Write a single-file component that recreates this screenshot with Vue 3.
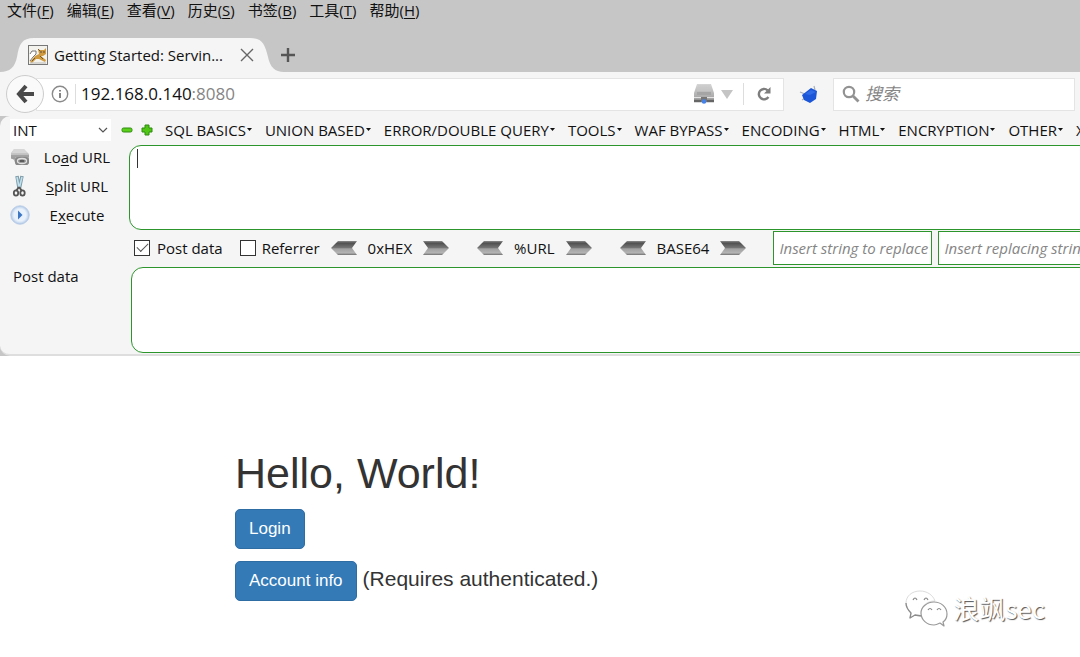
<script setup>
import { ref } from 'vue'

const menus = [
  ['文件', 'F'], ['编辑', 'E'], ['查看', 'V'], ['历史', 'S'],
  ['书签', 'B'], ['工具', 'T'], ['帮助', 'H'],
]
const hackMenus = [
  'SQL BASICS', 'UNION BASED', 'ERROR/DOUBLE QUERY', 'TOOLS', 'WAF BYPASS',
  'ENCODING', 'HTML', 'ENCRYPTION', 'OTHER', 'XSS',
]
const codecs = ['0xHEX', '%URL', 'BASE64']
const mode = ref('INT')
const postOn = ref(true)
const refOn = ref(false)
const url = ref('')
const body = ref('')
</script>

<template>
  <div class="browser">
    <svg class="defs" width="0" height="0" aria-hidden="true">
      <defs>
        <linearGradient id="steel" x1="0" y1="0" x2="0" y2="1">
          <stop offset="0" stop-color="#8c8c8c" />
          <stop offset="0.15" stop-color="#505050" />
          <stop offset="0.5" stop-color="#777" />
          <stop offset="0.55" stop-color="#a0a0a0" />
          <stop offset="0.85" stop-color="#b4b4b4" />
          <stop offset="1" stop-color="#707070" />
        </linearGradient>
        <linearGradient id="metal" x1="0" y1="0" x2="0" y2="1">
          <stop offset="0" stop-color="#d6d6d6" />
          <stop offset="1" stop-color="#9a9a9a" />
        </linearGradient>
        <radialGradient id="play">
          <stop offset="0.45" stop-color="#ffffff" />
          <stop offset="0.75" stop-color="#dbe7f6" />
          <stop offset="1" stop-color="#a9c2e4" />
        </radialGradient>
      </defs>
    </svg>

    <header class="chrome">
      <nav class="menubar">
        <button v-for="m in menus" :key="m[1]" type="button">{{ m[0] }}(<u>{{ m[1] }}</u>)</button>
      </nav>
      <div class="tabs">
        <div class="tab">
          <svg class="tab-shape" viewBox="0 0 284 34" preserveAspectRatio="none" aria-hidden="true">
            <path d="M0 34C10 34 15 29 17 19C19 6 22 0 34 0H250C262 0 265 6 268 19C270 29 275 34 284 34Z" fill="#f5f5f5" />
          </svg>
          <svg class="favicon" width="20" height="20" viewBox="0 0 20 20" aria-hidden="true">
            <rect x="0.5" y="0.5" width="19" height="19" fill="#f4f2ec" stroke="#777" />
            <path d="M2 9L4 6L8 6L8 9L5 12L2 16" fill="#fff" stroke="#666" stroke-width="0.9" />
            <path d="M10 4L12 5L16 5L18 3L18 9L15 11L13 11L18 15L17 17L11 14L8 14L4 18L2 17L7 11L11 9Z" fill="#d09a40" />
            <path d="M10 4L12 6M12 11L15 14M7 13L4 16" stroke="#6d5325" stroke-width="0.9" />
            <circle cx="13" cy="7" r="0.7" fill="#333" /><circle cx="16" cy="7" r="0.7" fill="#333" />
            <path d="M2 18H18" stroke="#b9b9b9" />
          </svg>
          <span class="tab-title">Getting Started: Servin...</span>
          <button type="button" class="tab-close" aria-label="Close tab">
            <svg width="14" height="14" viewBox="0 0 14 14"><path d="M1 1L13 13M13 1L1 13" stroke="#666" stroke-width="1.400" /></svg>
          </button>
        </div>
        <button type="button" class="new-tab" aria-label="New tab">
          <svg width="16" height="16" viewBox="0 0 16 16"><path d="M8 1V15M1 8H15" stroke="#555" stroke-width="2.400" /></svg>
        </button>
      </div>
    </header>

    <div class="navbar">
      <button type="button" class="back" aria-label="Back">
        <svg width="20" height="20" viewBox="0 0 20 20"><path d="M11 2L4 10L11 18M4.500 10H19" fill="none" stroke="#4a4a4a" stroke-width="4" /></svg>
      </button>
      <div class="address">
        <svg class="info" width="18" height="18" viewBox="0 0 18 18" aria-hidden="true">
          <circle cx="9" cy="9" r="7.700" fill="none" stroke="#8a8a8a" stroke-width="1.400" />
          <path d="M9 8V13M9 5V6.600" stroke="#777" stroke-width="1.800" />
        </svg>
        <a class="location" href="#">192.168.0.140<span>:8080</span></a>
        <svg class="server" width="20" height="20" viewBox="0 0 20 20" aria-hidden="true">
          <path d="M3 0H17L20 9V18H0V9Z" fill="url(#metal)" />
          <path d="M4 2H16M3.500 4H16.500M3 6H17" stroke="#c9c9c9" />
          <rect x="3" y="8" width="14" height="3" fill="#a5a5a5" />
          <path d="M0 13.500H20" stroke="#e4e4e4" />
          <path d="M0 17H20" stroke="#666" stroke-width="2.500" />
          <rect x="7" y="13" width="6" height="5" fill="#777" />
          <circle cx="10" cy="17.500" r="2.300" fill="#4682e8" />
        </svg>
        <svg class="drop" width="12" height="9" viewBox="0 0 12 9" aria-hidden="true"><path d="M0 0H12L6 9Z" fill="#c4c4c4" /></svg>
        <button type="button" class="reload" aria-label="Reload">
          <svg width="16" height="16" viewBox="0 0 16 16">
            <path d="M11.600 4.300A5.200 5.200 0 1 0 12.400 11" fill="none" stroke="#7d7d7d" stroke-width="2.400" />
            <path d="M14.500 1V7.500H8Z" fill="#7d7d7d" />
          </svg>
        </button>
      </div>
      <button type="button" class="addon" aria-label="Hackbar">
        <svg width="20" height="18" viewBox="0 0 20 18">
          <path d="M1 7L6 9M16 5L15 1M3 15L6 13" stroke="#a8b0ba" stroke-width="1.200" />
          <path d="M3 10L12 3L18 6L17 14L11 18L5 15Z" fill="#1c56d8" />
          <path d="M6 9L12 5L17 7L11 10Z" fill="#2f6be6" />
        </svg>
      </button>
      <label class="search">
        <svg width="18" height="18" viewBox="0 0 18 18" aria-hidden="true">
          <circle cx="7" cy="7" r="5.200" fill="none" stroke="#929292" stroke-width="2.200" />
          <path d="M11 11L16.500 16.500" stroke="#929292" stroke-width="2.800" />
        </svg>
        <input type="search" placeholder="搜索" aria-label="搜索" />
      </label>
    </div>

    <section class="hackbar">
      <div class="side">
        <div class="select-box">
          <select v-model="mode" aria-label="Type"><option>INT</option></select>
          <svg width="10" height="6" viewBox="0 0 10 6" aria-hidden="true"><path d="M1 1L5 5L9 1" fill="none" stroke="#555" stroke-width="1.200" /></svg>
        </div>
        <button type="button" class="action">
          <svg width="20" height="20" viewBox="0 0 20 20" aria-hidden="true">
            <path d="M4 2H14L19 7V16L17 18H6L4 13L1 11V6Z" fill="url(#metal)" />
            <path d="M4 2H14L17 6H2Z" fill="#d7d7d7" />
            <path d="M1 9H19M1 11H5" stroke="#888" />
            <rect x="5" y="10" width="14" height="8" rx="3" fill="#888" />
            <ellipse cx="12" cy="14" rx="4.500" ry="2.500" fill="none" stroke="#e1e1e1" stroke-width="1.300" />
            <path d="M10 14H14" stroke="#444" stroke-width="1.300" />
          </svg>
          <span>Lo<u>a</u>d URL</span>
        </button>
        <button type="button" class="action">
          <svg width="20" height="22" viewBox="0 0 20 22" aria-hidden="true">
            <path d="M7 1L9 13M12 1L9.500 13" stroke="#7f9ba8" stroke-width="3.500" />
            <path d="M7 2L9 12M12 2L9.500 12" stroke="#bfe0ee" stroke-width="1.600" />
            <path d="M9 12L6 16M9 12L12 16" stroke="#555" stroke-width="2" />
            <ellipse cx="6" cy="18" rx="2.200" ry="2.600" fill="none" stroke="#555" stroke-width="1.800" />
            <ellipse cx="12.500" cy="18" rx="2.200" ry="2.600" fill="none" stroke="#555" stroke-width="1.800" />
          </svg>
          <span><u>S</u>plit URL</span>
        </button>
        <button type="button" class="action">
          <svg width="20" height="20" viewBox="0 0 20 20" aria-hidden="true">
            <circle cx="10" cy="10" r="9.300" fill="url(#play)" stroke="#b9cbe6" stroke-width="0.800" />
            <circle cx="10" cy="10" r="6" fill="#e9f2fc" />
            <path d="M8 5.500L12.500 10L8 14.500Z" fill="#3e78c4" />
          </svg>
          <span>E<u>x</u>ecute</span>
        </button>
        <label class="post-label" for="post-body">Post data</label>
      </div>

      <div class="main">
        <div class="hack-menu">
          <button type="button" class="sign" aria-label="Remove">
            <svg width="12" height="12" viewBox="0 0 12 12"><rect x="1" y="4" width="10" height="4" rx="1.500" fill="#5bd01a" stroke="#2f8a10" /></svg>
          </button>
          <button type="button" class="sign" aria-label="Add">
            <svg width="12" height="12" viewBox="0 0 12 12"><path d="M4 1H8V4H11V8H8V11H4V8H1V4H4Z" fill="#4fc514" stroke="#2f8a10" stroke-linejoin="round" /></svg>
          </button>
          <div class="hack-items">
            <button v-for="h in hackMenus" :key="h" type="button">
              {{ h }}<svg width="5" height="3" viewBox="0 0 5 3" aria-hidden="true"><path d="M0 0H5L2.500 3Z" fill="#111" /></svg>
            </button>
          </div>
        </div>
        <div class="url-wrap">
          <textarea v-model="url" class="area" aria-label="URL"></textarea>
          <i class="caret"></i>
        </div>
        <div class="tools">
          <label class="check">
            <input v-model="postOn" type="checkbox" />Post data
          </label>
          <label class="check">
            <input v-model="refOn" type="checkbox" />Referrer
          </label>
          <div v-for="c in codecs" :key="c" class="codec">
            <button type="button" :aria-label="'Decode ' + c">
              <svg width="28" height="16" viewBox="0 0 28 16"><path d="M1 8L8 1H27L22 8L27 15H8Z" fill="url(#steel)" /></svg>
            </button>
            <span>{{ c }}</span>
            <button type="button" :aria-label="'Encode ' + c">
              <svg width="28" height="16" viewBox="0 0 28 16"><path d="M27 8L20 1H1L6 8L1 15H20Z" fill="url(#steel)" /></svg>
            </button>
          </div>
          <div class="replace">
            <input type="text" placeholder="Insert string to replace" aria-label="Insert string to replace" />
            <input type="text" placeholder="Insert replacing string" aria-label="Insert replacing string" />
          </div>
        </div>
        <textarea id="post-body" v-model="body" class="area post"></textarea>
      </div>
    </section>

    <main class="page">
      <h1>Hello, World!</h1>
      <p><a class="btn" href="#">Login</a></p>
      <p><a class="btn" href="#">Account info</a><span>(Requires authenticated.)</span></p>
    </main>

    <div class="watermark">
      <svg width="44" height="38" viewBox="0 0 44 38" aria-hidden="true">
        <g fill="#fff" stroke-linejoin="round">
          <path d="M15 2C7 2 1 7 1 14C1 18 3 21 6 24L5 29L10 26C12 27 14 27 17 27C15 18 21 12 30 12C28 6 22 2 15 2Z" stroke="#dcdcdc" />
          <path d="M1 14C1 18 3 21 6 24L5 29L10 26L17 27" fill="none" stroke="#8c8c8c" stroke-width="1.300" />
          <path d="M29 13C22 13 16 18 16 24C16 31 22 36 29 36C31 36 33 35 35 34L39 37L38 33C41 31 42 28 42 25C42 18 36 13 29 13Z" stroke="#999" stroke-width="1.200" />
          <path d="M8 11Q10 7 12 11M19 11Q21 7 23 11M23 21Q25 18 27 21M32 21Q34 18 36 21" fill="none" stroke="#888" stroke-width="1.200" />
        </g>
      </svg>
      <span>浪飒sec</span>
    </div>
  </div>
</template>

<style>
body {
  margin: 0;
  background: #fff;
  overflow: hidden;
}
</style>

<style scoped>
.browser {
  position: relative;
  min-height: 100vh;
  overflow: hidden;
  font: 15px/20px "Open Sans", "Noto Sans CJK SC", sans-serif;
  color: #111;
}
.browser *, .browser *::before { box-sizing: border-box; }
.defs { position: absolute; }
svg { display: block; flex: none; }
button {
  padding: 0;
  border: 0;
  background: none;
  font: inherit;
  color: inherit;
  white-space: nowrap;
}
input, textarea, select { font: inherit; color: inherit; outline: 0; }
u { text-underline-offset: 2px; }

.chrome { background: #c6c6c6; }
.menubar {
  display: flex;
  gap: 13px;
  height: 38px;
  padding: 0 7px;
  align-items: flex-start;
}
.tabs { display: flex; height: 34px; align-items: stretch; }
.tab {
  position: relative;
  display: flex;
  align-items: center;
  width: 284px;
  padding: 0 30px 0 28px;
}
.tab-shape { position: absolute; inset: 0; width: 100%; height: 100%; }
.favicon, .tab-title, .tab-close { position: relative; }
.tab-title { flex: 1; margin-left: 6px; white-space: nowrap; }
.new-tab { margin-left: -4px; }

.navbar {
  display: flex;
  align-items: center;
  height: 44px;
  padding: 0 5px 0 6px;
  background: #f5f5f5;
}
.back {
  position: relative;
  z-index: 1;
  display: grid;
  place-items: center;
  width: 38px;
  height: 38px;
  border: 1px solid #ccc;
  border-radius: 50%;
  background: #fafafa;
}
.address {
  flex: 1;
  display: flex;
  align-items: center;
  height: 33px;
  margin-left: -8px;
  padding-left: 14px;
  border: 1px solid #e4e4e4;
  background: #fff;
}
.location {
  flex: 1;
  margin-left: 6px;
  padding-left: 5px;
  border-left: 1px solid #ddd;
  color: #111;
  font-size: 17px;
  text-decoration: none;
}
.location span { color: #858585; }
.drop { margin: 0 10px 0 7px; }
.reload {
  display: grid;
  place-items: center;
  width: 40px;
  height: 22px;
  border-left: 1px solid #ddd;
}
.addon { margin: 0 14px 0 15px; }
.search {
  display: flex;
  align-items: center;
  gap: 5px;
  width: 242px;
  height: 33px;
  padding: 0 8px;
  border: 1px solid #e4e4e4;
  background: #fff;
}
.search input { flex: 1; min-width: 0; padding: 0; border: 0; background: none; font-size: 17px; }
::placeholder { color: #858585; font-style: italic; opacity: 1; }

.hackbar {
  display: flex;
  height: 240px;
  background: #f5f5f5;
  border-bottom: 2px solid #dedede;
  border-radius: 10px 0 0 10px;
  box-shadow: 0 0 0 10px #c6c6c6;
  clip-path: inset(0);
}
.side { flex: none; width: 121px; padding: 3px 0 0 10px; }
.select-box { position: relative; width: 101px; height: 22px; margin-bottom: 6px; }
.select-box select {
  appearance: none;
  width: 100%;
  height: 22px;
  padding: 0 3px;
  border: 0;
  border-radius: 0;
  background: #fff;
}
.select-box svg { position: absolute; right: 3px; top: 8px; }
.action { display: flex; align-items: center; width: 102px; height: 20px; margin-bottom: 9px; }
.action span { flex: 1; text-align: center; margin-left: 12px; }
.post-label { display: block; margin: 41px 0 0 3px; }

.main { flex: 1; min-width: 0; padding-left: 8px; overflow: hidden; }
.hack-menu { display: flex; align-items: center; height: 29px; margin-left: -8px; padding-bottom: 2px; }
.sign { margin-right: 8px; }
.hack-items { display: flex; gap: 13px; margin-left: 4px; }
.hack-items button { display: flex; align-items: center; gap: 1px; }
.url-wrap { position: relative; height: 85px; margin-right: -20px; }
.area {
  display: block;
  width: 100%;
  height: 85px;
  margin: 0;
  padding: 5px 8px;
  border: 1px solid #2c962c;
  border-radius: 12px;
  background: #fff;
  resize: none;
}
.caret { position: absolute; left: 8px; top: 4px; width: 1px; height: 19px; background: #333; }
.tools { display: flex; align-items: center; height: 37px; padding: 0 0 1px 5px; white-space: nowrap; }
.check { display: flex; align-items: center; gap: 7px; margin-right: 10px; }
.check + .check { gap: 6px; margin-left: 7px; }
.check input {
  appearance: none;
  width: 16px;
  height: 16px;
  margin: 0;
  border: 1px solid #333;
  background: #fff;
}
.check input:checked::before {
  content: "";
  display: block;
  width: 11px;
  height: 6px;
  margin: 2px 0 0 2px;
  border: solid #555;
  border-width: 0 0 1px 1px;
  transform: rotate(-45deg);
}
.codec { display: flex; align-items: center; gap: 10px; margin-right: 26px; }
.replace { display: flex; flex: none; gap: 6px; }
.replace input {
  width: 159px;
  height: 34px;
  padding: 0 1px 0 5px;
  border: 1px solid #2c962c;
  background: #fff;
}
.area.post { width: calc(100% + 18px); height: 86px; margin-left: 2px; }

.page {
  padding: 93px 235px 0;
  font-family: "Liberation Sans", Arial, sans-serif;
  color: #333;
}
h1 { margin: 0; font-size: 43px; line-height: 48px; font-weight: 400; }
.page p { display: flex; align-items: flex-start; gap: 6px; margin: 12px 0 0; font-size: 21px; line-height: 36px; white-space: nowrap; }
.btn {
  padding: 0 13px;
  border: 1px solid #2e6da4;
  border-radius: 5px;
  background: #337ab7;
  color: #fff;
  font-size: 17px;
  line-height: 38px;
  text-decoration: none;
}
.watermark {
  position: absolute;
  right: 35px;
  bottom: 30px;
  display: flex;
  align-items: center;
  gap: 4px;
  color: #fff;
  font: 26px/38px "Noto Sans CJK SC", sans-serif;
  text-shadow: 1px 1px 1px #555;
}
</style>
